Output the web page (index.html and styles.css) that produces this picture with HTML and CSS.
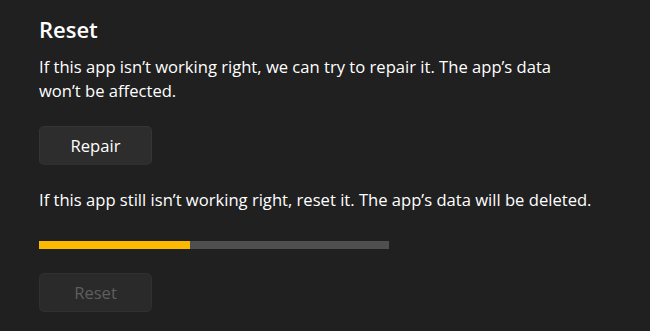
FILE: index.html
```html
<!DOCTYPE html>
<html>
<head>
<meta charset="utf-8">
<link rel="stylesheet" href="styles.css">
</head>
<body>
<main class="page">
  <h1 class="title">Reset</h1>
  <p class="desc">If this app isn’t working right, we can try to repair it. The app’s data won’t be affected.</p>
  <button class="btn">Repair</button>
  <p class="desc desc2">If this app still isn’t working right, reset it. The app’s data will be deleted.</p>
  <div class="progress"><div class="progress-fill" style="width:43%"></div></div>
  <button class="btn btn-disabled" disabled>Reset</button>
</main>
</body>
</html>
```
FILE: styles.css
```css
html, body {
  margin: 0;
  padding: 0;
  background: #202020;
  width: 650px;
  height: 331px;
  overflow: hidden;
}
.page {
  display: flex;
  flex-direction: column;
  align-items: flex-start;
  padding: 13px 0 0 39px;
  font-family: "Open Sans", "Noto Sans", sans-serif;
  color: #ffffff;
}
.title {
  margin: 0;
  font-size: 22px;
  font-weight: 600;
  line-height: 32px;
}
.desc {
  margin: 10px 0 0 0;
  font-size: 16.6px;
  line-height: 24px;
  width: 540px;
}
.btn {
  margin-top: 23px;
  width: 113px;
  height: 39px;
  border-radius: 5px;
  background: #2d2d2d;
  border: 1px solid #353535;
  border-bottom-color: #2f2f2f;
  color: #ffffff;
  font-family: "Open Sans", "Noto Sans", sans-serif;
  font-size: 16.6px;
  padding: 0;
}
.desc2 {
  margin-top: 23px;
  width: 611px;
}
.progress {
  margin-top: 29px;
  width: 350px;
  height: 8px;
  background: #4f4f4f;
  display: flex;
}
.progress-fill {
  background: #fdb900;
  height: 100%;
}
.btn-disabled {
  margin-top: 24px;
  background: #2a2a2a;
  border-color: #303030;
  color: #5e5e5e;
}
```
